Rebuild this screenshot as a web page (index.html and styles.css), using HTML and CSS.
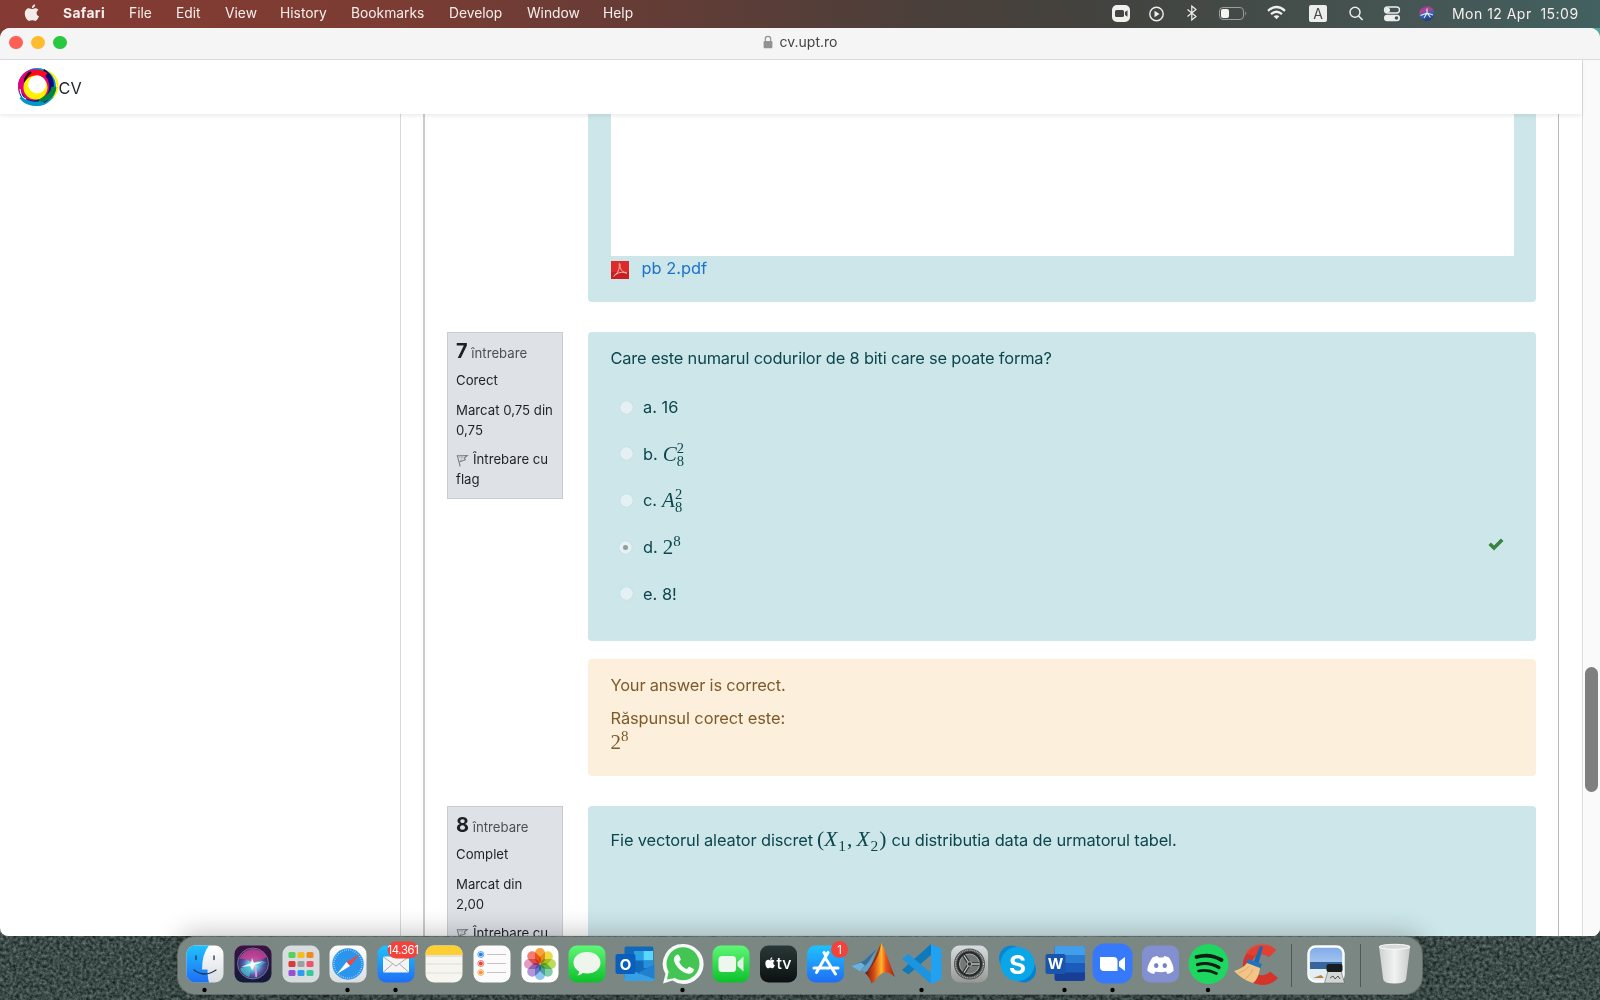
FILE: index.html
```html
<!DOCTYPE html>
<html lang="ro">
<head>
<meta charset="utf-8">
<title>CV</title>
<link rel="stylesheet" href="styles.css">
</head>
<body>
<div class="desktop">
<svg class="wallpaper" width="1600" height="75"><filter id="grain" x="0" y="0" width="100%" height="100%" color-interpolation-filters="sRGB"><feTurbulence type="fractalNoise" baseFrequency="0.3" numOctaves="3" seed="4"/><feColorMatrix values="0 0.45 0 0 0.01  0 0.48 0 0 0.05  0 0.47 0 0 0.045  0 0 0 0 1"/></filter><rect width="1600" height="75" filter="url(#grain)"/></svg>

<header class="menubar">
  <svg class="apple" viewBox="0 0 16 18"><path d="M8 5.100C9 5.100 9.700 4.200 11.200 4.200c1.400 0 2.500.7 3.200 1.700-2.700 1.500-2.300 5.300.6 6.400-.7 2-2.100 4.500-3.600 4.600-1.100 0-1.700-.7-3.200-.7-1.400 0-2 .7-3.100.7C3 17 .8 12.700.8 9.600c0-3.400 2.100-5.400 4.200-5.400 1.300 0 2.200.9 3 .9zM7.900 4.200C7.800 2.300 9.300.6 11.100.3c.3 2-1.400 3.900-3.200 3.900z" fill="#f3ebe9"/></svg>
  <nav class="menus"><b class="m-safari">Safari</b><span class="m-file">File</span><span class="m-edit">Edit</span><span class="m-view">View</span><span class="m-history">History</span><span class="m-bookmarks">Bookmarks</span><span class="m-develop">Develop</span><span class="m-window">Window</span><span>Help</span></nav>
  <div class="status">
    <svg width="36" height="27"><rect x="9" y="5" width="18" height="17" rx="5" fill="#f0f0ee"/><rect x="12" y="10" width="9" height="7" rx="1.500" fill="#454440"/><path d="M22 12l2.500-1.800v6.600L22 15z" fill="#454440"/></svg>
    <svg width="35" height="27"><circle cx="17.500" cy="14" r="6.700" fill="none" stroke="#efefed" stroke-width="1.400"/><path d="M15.500 10.800v6.400l5-3.200z" fill="#efefed"/></svg>
    <svg width="36" height="27"><path d="M13.500 9.500l8.500 7-4.200 3.500V6l4.200 3.500-8.500 7" fill="none" stroke="#efefed" stroke-width="1.200"/></svg>
    <svg width="45" height="27"><rect x="9.500" y="7.500" width="24" height="12" rx="3.500" fill="none" stroke="#9b9e9b"/><path d="M35.300 11.500q2 2 0 4z" fill="#9b9e9b"/><rect x="11" y="9" width="8" height="9" rx="2" fill="#f4f4f2"/></svg>
    <svg width="43" height="27"><g fill="none" stroke="#efefed" stroke-width="2.300"><path d="M13 10.800q8.500-7.600 17 0"/><path d="M16 14.100q5.500-4.800 11 0"/></g><path d="M18.600 16.300q2.900-2.200 5.800 0l-2.900 3z" fill="#efefed"/></svg>
    <svg width="40" height="27"><rect x="11" y="5" width="18" height="17" rx="2" fill="#eceeed"/><text x="20" y="18.600" text-anchor="middle" class="kbd">A</text></svg>
    <svg width="36" height="27"><circle cx="17" cy="12.300" r="5" fill="none" stroke="#eceeed" stroke-width="1.500"/><path d="M20.600 16l4 4" stroke="#eceeed" stroke-width="1.700"/></svg>
    <svg width="36" height="27"><rect x="10.500" y="7" width="15" height="6" rx="3" fill="none" stroke="#eceeed" stroke-width="1.300"/><circle cx="13.500" cy="10" r="2.500" fill="#eceeed"/><rect x="10" y="14.800" width="16" height="6.500" rx="3.200" fill="#eceeed"/><circle cx="22.500" cy="18" r="1.800" fill="#465553"/></svg>
    <svg width="34" height="27"><defs><linearGradient id="orb" x2="0.300" y2="1"><stop offset="0" stop-color="#4a4a9b"/><stop offset=".35" stop-color="#c0408c"/><stop offset=".65" stop-color="#3563b8"/><stop offset="1" stop-color="#243d80"/></linearGradient></defs><circle cx="16.800" cy="13.500" r="7.500" fill="url(#orb)"/><path d="M10.500 15.500l6.500-2.500 6 2M17 8.500v4.500l-3 5M17 13l3.500 4.500" fill="none" stroke="#d8f4f5" stroke-width="1.100"/></svg>
    <span class="clock">Mon 12 Apr&nbsp; 15:09</span>
  </div>
</header>

<main class="window">
  <div class="titlebar">
    <i class="light red"></i><i class="light amber"></i><i class="light green"></i>
    <div class="address"><svg width="10" height="14" viewBox="0 0 10 14"><path d="M2.300 6V4a2.700 2.700 0 0 1 5.400 0v2" fill="none" stroke="#929292" stroke-width="1.200"/><rect x=".6" y="6" width="8.800" height="7.300" rx="1.200" fill="#929292"/></svg>cv.upt.ro</div>
  </div>
  <div class="viewport">
    <div class="site">
      <div class="sitebar">
        <svg class="logo" width="44" height="44" viewBox="16 65 44 44"><g fill="none"><circle cx="42" cy="86" r="15.500" stroke="#fff100" stroke-width="2"/><circle cx="37" cy="87" r="16" stroke="#0098c4" stroke-width="6"/><circle cx="34.800" cy="86" r="14" stroke="#e6007e" stroke-width="5.500"/><path d="M43 71q11 7 8 20-2 7-8 10" stroke="#0c0876" stroke-width="4.500"/><path d="M26 91q-1-16 11-18 5-1 9 2" stroke="#ff0a16" stroke-width="5"/><path d="M25 82q0-6 6-10" stroke="#1d0710" stroke-width="2.500"/><path d="M54 87q-1 10-15 13.500" stroke="#008540" stroke-width="5"/><path d="M21 94q5 10 18 7" stroke="#0d147a" stroke-width="2.500"/><path d="M21 97q7 9 20 6" stroke="#0098c4" stroke-width="4"/><path d="M20 89q1 9 6 10" stroke="#fff" stroke-width="1"/></g><circle cx="35.500" cy="87.500" r="12" fill="#fff100"/><circle cx="37" cy="84.500" r="9" fill="#fff"/></svg><span>CV</span>
      </div>
      <div class="page">
        <aside class="drawer"></aside>
        <div class="gutter"></div>
        <section class="quiz">
          <div class="question">
            <div class="info-space"></div>
            <div class="content upload">
              <div class="frame"></div>
              <div class="file"><svg width="18" height="18" viewBox="0 0 18 18"><rect width="18" height="18" fill="#dc2b2b"/><rect y="11" width="18" height="7" fill="#c71f22"/><path d="M2.500 15.500C6 13.500 9 8 8.200 3.500c-.3-1.600 1-1.400.8.200C8.600 8 12 12 16 12.300M3 14.500C6.500 11.500 11 10.800 15.500 11.500" fill="none" stroke="#f8b6ad" stroke-width="1"/></svg><a>pb 2.pdf</a></div>
            </div>
          </div>

          <div class="question">
            <div class="info">
              <h3><b>7</b> întrebare</h3>
              <p>Corect</p>
              <p>Marcat 0,75 din 0,75</p>
              <p><svg class="flag" width="13" height="14" viewBox="0 0 13 14"><path d="M1.200 2.200L4.200 13.500M1.500 2.800l9.800-.3-3 2.600 1 1.600-5.500 2" fill="none" stroke="#7c8085" stroke-width="1.100"/><path d="M3 4l4 0-3 4" fill="none" stroke="#a0a4a9" stroke-width=".8"/></svg>Întrebare cu flag</p>
            </div>
            <div class="column">
              <div class="content multi">
                <div class="qtext">Care este numarul codurilor de 8 biti care se poate forma?</div>
                <div class="answer"><i class="radio"></i><span>a. 16</span></div>
                <div class="answer"><i class="radio"></i><span>b.</span><span class="math"><em>C</em><span class="both"><span>2</span><span>8</span></span></span></div>
                <div class="answer"><i class="radio"></i><span>c.</span><span class="math"><em>A</em><span class="both"><span>2</span><span>8</span></span></span></div>
                <div class="answer"><i class="radio checked"></i><span>d.</span><span class="math">2<sup>8</sup></span><svg class="tick" width="16" height="13" viewBox="0 0 16 13"><path d="M1.700 5.700l4.300 4.300 8.200-8.200" fill="none" stroke="#388340" stroke-width="3.600"/></svg></div>
                <div class="answer"><i class="radio"></i><span>e. 8!</span></div>
              </div>
              <div class="feedback"><p>Your answer is correct.</p><p>Răspunsul corect este:</p><div class="math">2<sup>8</sup></div></div>
            </div>
          </div>

          <div class="question">
            <div class="info">
              <h3><b>8</b> întrebare</h3>
              <p>Complet</p>
              <p>Marcat din<br>2,00</p>
              <p><svg class="flag" width="13" height="14" viewBox="0 0 13 14"><path d="M1.200 2.200L4.200 13.500M1.500 2.800l9.800-.3-3 2.600 1 1.600-5.500 2" fill="none" stroke="#7c8085" stroke-width="1.100"/><path d="M3 4l4 0-3 4" fill="none" stroke="#a0a4a9" stroke-width=".8"/></svg>Întrebare cu</p>
            </div>
            <div class="column">
              <div class="content table-question"><span class="before">Fie vectorul aleator discret</span><span class="math">(<em>X</em><sub>1</sub>,<em class="second">X</em><sub>2</sub>)</span><span class="after">cu distributia data de urmatorul tabel.</span></div>
            </div>
          </div>
        </section>
      </div>
    </div>
    <div class="scrollbar"><i class="thumb"></i></div>
  </div>
</main>

<footer class="dock">
  <svg class="defs" width="0" height="0"><defs>
    <linearGradient id="sky" x2="0" y2="1"><stop offset="0" stop-color="#1fc2ff"/><stop offset="1" stop-color="#1e6ef4"/></linearGradient>
    <linearGradient id="silver" x2="0" y2="1"><stop offset="0" stop-color="#fff"/><stop offset="1" stop-color="#d9dde1"/></linearGradient>
    <linearGradient id="lime" x2="0" y2="1"><stop offset="0" stop-color="#5ff777"/><stop offset="1" stop-color="#0cc02b"/></linearGradient>
    <linearGradient id="night" x2="0" y2="1"><stop offset="0" stop-color="#2a3836"/><stop offset="1" stop-color="#0b1011"/></linearGradient>
    <linearGradient id="siribg" x2="0" y2="1"><stop offset="0" stop-color="#3b1243"/><stop offset="1" stop-color="#111b38"/></linearGradient>
    <radialGradient id="siri" cy=".55"><stop offset="0" stop-color="#fff"/><stop offset=".3" stop-color="#69d5e8"/><stop offset=".65" stop-color="#5a58a8"/><stop offset="1" stop-color="#273263"/></radialGradient>
    <linearGradient id="flame" x2="1" y2="0"><stop offset="0" stop-color="#5d1a1a"/><stop offset=".3" stop-color="#d74a14"/><stop offset=".55" stop-color="#ffb62b"/><stop offset=".7" stop-color="#e5501b"/><stop offset="1" stop-color="#9e2710"/></linearGradient>
    <linearGradient id="metal" x2="0" y2="1"><stop offset="0" stop-color="#d9dde0"/><stop offset="1" stop-color="#989894"/></linearGradient>
    <linearGradient id="scene" x2="0" y2="1"><stop offset="0" stop-color="#7ea9e8"/><stop offset="1" stop-color="#cfe3fa"/></linearGradient>
    <linearGradient id="can"><stop offset="0" stop-color="#cfd1d1"/><stop offset=".5" stop-color="#f1f2f2"/><stop offset="1" stop-color="#c8caca"/></linearGradient>
  </defs></svg>

  <svg class="app"><rect x="5.500" y="8.500" width="37" height="37" rx="8.500" fill="url(#silver)"/><path d="M28 8.500H14a8.500 8.500 0 0 0-8.500 8.500v20a8.500 8.500 0 0 0 8.500 8.500h14q-1.500-5-1.500-13h-5.500Q21 17 28 8.500z" fill="url(#sky)"/><path d="M15 19v3.500M33 19v3.500M13 33q10.500 8 22 0" fill="none" stroke="#20364e" stroke-width="1.300" stroke-linecap="round"/><circle cx="23.500" cy="53" r="2.200"/></svg>

  <svg class="app"><rect x="5.500" y="8.500" width="37" height="37" rx="8.500" fill="url(#siribg)"/><circle cx="24" cy="26.500" r="15.500" fill="url(#siri)" stroke="#9b87b4" stroke-width=".7"/><path d="M10 22q5-10 14-10t14 8q-5 3-14 6-7-5-14-4z" fill="#cf3c91" opacity=".8"/><path d="M11 32q9-6 13-5 4-2 13-2-6 5-13 3-2 5-4 12-6-2-9-8z" fill="#48c7d0" opacity=".7"/><path d="M24 28q4 5 3 12" fill="none" stroke="#f0a0d8" stroke-width="2" opacity=".9"/><path d="M12 30l10-4 1-5 2 5 10-2-9 4-3 5-2-4z" fill="#fff" opacity=".9"/></svg>

  <svg class="app"><rect x="5.500" y="8.500" width="37" height="37" rx="8.500" fill="#d7dcdf"/><g><rect x="11.500" y="15" width="7" height="6" rx="1.500" fill="#55d05e"/><rect x="20.500" y="15" width="7" height="6" rx="1.500" fill="#f7bd20"/><rect x="29.500" y="15" width="7" height="6" rx="1.500" fill="#ef8b21"/><rect x="11.500" y="24" width="7" height="6" rx="1.500" fill="#d83b35"/><rect x="20.500" y="24" width="7" height="6" rx="1.500" fill="#9da0a0"/><rect x="29.500" y="24" width="7" height="6" rx="1.500" fill="#f34f6e"/><rect x="11.500" y="33" width="7" height="6" rx="1.500" fill="#9650d2"/><rect x="20.500" y="33" width="7" height="6" rx="1.500" fill="#2e9bf0"/><rect x="29.500" y="33" width="7" height="6" rx="1.500" fill="#37c99b"/></g></svg>

  <svg class="app"><rect x="5.500" y="8.500" width="37" height="37" rx="8.500" fill="url(#silver)"/><circle cx="24" cy="27" r="15.700" fill="#2b94ec"/><circle cx="24" cy="27" r="14" fill="none" stroke="#bce2ff" stroke-width="1.500" stroke-dasharray=".6 1.600"/><path d="M36 17L22.500 25l3.500 4z" fill="#f0483e"/><path d="M13 37l9.500-12 3.500 4z" fill="#fff"/><circle cx="23.500" cy="53" r="2.200"/></svg>

  <svg class="app"><rect x="5.500" y="8.500" width="37" height="37" rx="8.500" fill="url(#sky)"/><rect x="11" y="19.500" width="26" height="16" rx="1.500" fill="#f4f4f2"/><path d="M11.500 20l12.500 9 12.500-9M11.500 35l9-8M36.500 35l-9-8" fill="none" stroke="#a9adaf"/><rect x="15.500" y="4.500" width="31" height="17" rx="8.500" fill="#f1423b"/><text x="31" y="16.500" class="badge">14.361</text><circle cx="23.500" cy="53" r="2.200"/></svg>

  <svg class="app"><rect x="5.500" y="8.500" width="37" height="37" rx="8.500" fill="#f7f5f0"/><path d="M5.500 18v-1a8.500 8.500 0 0 1 8.500-8.500h20a8.500 8.500 0 0 1 8.500 8.500v1z" fill="#fdcf34"/><path d="M5.500 19h37" stroke="#9d958a" stroke-dasharray="1 1" stroke-width=".8"/><path d="M6 27h36M6 36h36" stroke="#d9d7d2" stroke-width=".8"/></svg>

  <svg class="app"><rect x="5.500" y="8.500" width="37" height="37" rx="8.500" fill="#fbfbfc"/><path d="M19 17.500h19M19 26.500h19M19 35.500h19" stroke="#c7c1c7"/><g fill="#1e82ea"><circle cx="12.800" cy="17.500" r="2"/><circle cx="12.800" cy="17.500" r="3" fill="none" stroke="#1e82ea" stroke-width=".7"/></g><circle cx="12.800" cy="26.500" r="2" fill="#e74136"/><circle cx="12.800" cy="26.500" r="3" fill="none" stroke="#e74136" stroke-width=".7"/><circle cx="12.800" cy="35.500" r="2" fill="#f19732"/><circle cx="12.800" cy="35.500" r="3" fill="none" stroke="#f19732" stroke-width=".7"/></svg>

  <svg class="app"><rect x="5.500" y="8.500" width="37" height="37" rx="8.500" fill="#fff"/><g class="petals"><rect x="19" y="11" width="10" height="15.500" rx="5" fill="#f79a28"/><rect x="19" y="11" width="10" height="15.500" rx="5" fill="#e6d72f" transform="rotate(45 24 27)"/><rect x="19" y="11" width="10" height="15.500" rx="5" fill="#b4d849" transform="rotate(90 24 27)"/><rect x="19" y="11" width="10" height="15.500" rx="5" fill="#72c9a0" transform="rotate(135 24 27)"/><rect x="19" y="11" width="10" height="15.500" rx="5" fill="#82bfec" transform="rotate(180 24 27)"/><rect x="19" y="11" width="10" height="15.500" rx="5" fill="#a98cd4" transform="rotate(225 24 27)"/><rect x="19" y="11" width="10" height="15.500" rx="5" fill="#df91c1" transform="rotate(270 24 27)"/><rect x="19" y="11" width="10" height="15.500" rx="5" fill="#f3705e" transform="rotate(315 24 27)"/></g></svg>

  <svg class="app"><rect x="5.500" y="8.500" width="37" height="37" rx="8.500" fill="url(#lime)"/><path d="M24 15c8 0 13.500 4.700 13.500 10.700S32 36.500 24 36.500c-1.500 0-3-.2-4.200-.5-1.700 1.600-3.500 2.400-5.500 2.400 1.200-1.200 1.800-2.500 1.800-3.900-3.500-2-5.600-5-5.600-8.800C10.500 19.700 16 15 24 15z" fill="#edf5ed"/></svg>

  <svg class="app"><rect x="13.500" y="9.500" width="29" height="32" rx="2" fill="#1268b9"/><path d="M23 14h9.500v9.500H23z" fill="#2aa1e4"/><path d="M32.500 14h9.500v9.500h-9.500z" fill="#58d8fa"/><path d="M32.500 23.500h9.500V31h-9.500z" fill="#2590dc"/><path d="M13.500 28l15 9 15-10v15.500a1.500 1.500 0 0 1-1.500 1.500H15a1.500 1.500 0 0 1-1.500-1.500z" fill="#36a0e6"/><path d="M27 36l16.500-9v15z" fill="#227fce"/><rect x="4.500" y="17" width="20" height="20" rx="2" fill="#0a5fbd"/><text x="14.500" y="32.500" class="letter">O</text></svg>

  <svg class="app"><path d="M24 7A20 20 0 1 1 13.500 43.600L4 46.500 6.500 37A20 20 0 0 1 24 7z" fill="#f7faf8"/><circle cx="24" cy="26.700" r="16.500" fill="#43c554"/><path d="M9.500 35L8 42.500 16.500 41z" fill="#43c554"/><path d="M18.500 17.500c1.800-.6 2.500 3.600 3.300 4.500.3 1-1.700 2.500-1.700 3 2 4 4.500 5.700 7.500 7 .8 0 2-2.400 2.800-2.300 2 .9 4.500 2 4.500 2.500 0 3-3 4.800-5.200 4.600-6.500-.8-14-7.500-14.800-14 0-2.800 2-5 3.600-5.300z" fill="#f9fcf9"/><circle cx="23.500" cy="53" r="2.200"/></svg>

  <svg class="app"><rect x="5.500" y="8.500" width="37" height="37" rx="8.500" fill="url(#lime)"/><rect x="11.500" y="19" width="17.500" height="16" rx="3.500" fill="#edf7ed"/><path d="M30.500 25l6-5.500v15l-6-5.500z" fill="#e1f0e2"/></svg>

  <svg class="app"><rect x="5" y="8.500" width="37" height="37" rx="8.500" fill="url(#night)"/><g transform="translate(9.800 20) scale(.67)"><path d="M8 5.100c1 0 1.700-.9 3.200-.9 1.400 0 2.500.7 3.200 1.700-2.700 1.500-2.300 5.300.6 6.400-.7 2-2.100 4.500-3.600 4.600-1.100 0-1.700-.7-3.200-.7-1.400 0-2 .7-3.100.7C3 17 .8 12.700.8 9.600c0-3.400 2.100-5.400 4.200-5.400 1.300 0 2.200.9 3 .9zM7.900 4.200C7.800 2.300 9.300.6 11.100.3c.3 2-1.400 3.900-3.200 3.900z" fill="#fff"/></g><text x="21.500" y="32" class="tv">tv</text></svg>

  <svg class="app"><rect x="5" y="8.500" width="37" height="37" rx="8.500" fill="url(#sky)"/><path d="M22 15.500l2 3.500 2-3.500M24 19l-9.500 16.500M23 20.500L33.500 37M12 31h15M31 31h5" fill="none" stroke="#fff" stroke-width="3" stroke-linecap="round"/><circle cx="37.500" cy="12.500" r="8.500" fill="#f1423b"/><text x="37.500" y="16.500" class="badge">1</text></svg>

  <svg class="app"><path d="M1 29l13-5.500L27 11l-9 25z" fill="#5f9fc8"/><path d="M1 29l9 5.500 9-10 8-13-13 12z" fill="#3b6f98"/><path d="M1 29l9 5.500 5-6-4-3z" fill="#6fb0d8"/><path d="M15 36c7-5 11-20 16-30 5 8 8 19 14 34-6-5-9-6-14-3-4 3-6 8-9.500 9.500-1-4-3-7-6.500-10.500z" fill="url(#flame)"/><path d="M31 6c-1 10-5 18-10.500 25L15 36c7-5 11-20 16-30z" fill="#6b1f1a" opacity=".7"/></svg>

  <svg class="app"><path d="M33 7L43.500 12v30L33 47z" fill="#21a1f1"/><path d="M33 7v11L10.500 37.500 4 33z" fill="#0f79bd"/><path d="M10.500 17L33 36v11L4 21.500z" fill="#1d94df"/><circle cx="23.500" cy="53" r="2.200"/></svg>

  <svg class="app"><rect x="5" y="8.500" width="37" height="37" rx="8.500" fill="url(#metal)"/><g transform="translate(-.5 0)"><circle cx="24" cy="27" r="15.500" fill="#505454"/><circle cx="24" cy="27" r="14" fill="none" stroke="#b8bbba" stroke-width="1.200" stroke-dasharray="1 .8"/><circle cx="24" cy="27" r="11" fill="none" stroke="#262a2a" stroke-width="3"/><circle cx="24" cy="27" r="10" fill="#747978" stroke="#c0c2c1" stroke-width=".8"/><g stroke="#2f3434" stroke-width="3.500"><path d="M24 27h10M24 27l-5.500-8.500M24 27l-5.500 8.500"/></g><g stroke="#bfc2c1" stroke-width="1.300"><path d="M24 27h10M24 27l-5.500-8.500M24 27l-5.500 8.500"/></g><circle cx="24" cy="27" r="2.300" fill="#303535" stroke="#b4b6b5"/></g></svg>

  <svg class="app"><circle cx="17.500" cy="21" r="12.500" fill="#0a86d1"/><circle cx="29.500" cy="33" r="12.500" fill="#0681d0"/><circle cx="23.500" cy="27" r="17" fill="#0ba6e8"/><text x="23.500" y="36.500" class="skype">S</text></svg>

  <svg class="app"><rect x="13.500" y="9" width="30.500" height="35" rx="2" fill="#173f96"/><path d="M15 9h27.500a1.500 1.500 0 0 1 1.500 1.500V18H13.500v-7.500A1.500 1.500 0 0 1 15 9z" fill="#429eea"/><path d="M13.500 18H44v8.500H13.500z" fill="#2b7bd3"/><path d="M13.500 26.500H44v9H13.500z" fill="#1c5bb9"/><rect x="4.500" y="17" width="20" height="20" rx="2" fill="#1955ad"/><text x="14.500" y="32" class="letter">W</text><circle cx="23.500" cy="53" r="2.200"/></svg>

  <svg class="app"><rect x="3.500" y="6.500" width="40" height="40" rx="12" fill="#3779fb"/><path d="M11 20h13.500a4 4 0 0 1 4 4v10H15a4 4 0 0 1-4-4z" fill="#fff"/><path d="M30 24.500l6-4.500v14l-6-4.500z" fill="#fff"/><circle cx="23.500" cy="53" r="2.200"/></svg>

  <svg class="app"><rect x="5" y="8.500" width="37" height="37" rx="8.500" fill="#8290d2"/><path d="M15.500 20.500q3-1.500 5-1.500l1 1.500h5L27 19q2 0 5 1.500c3 4.500 5 9.500 4.500 13.500q-3 2.500-6 3l-1.500-2.500q-5 1.500-10.500 0L17 37Q13.500 36.500 10.500 34c-.5-4 2-9 5-13.500z" fill="#fff"/><ellipse cx="19.200" cy="28.500" rx="2.200" ry="2.500" fill="#7482c4"/><ellipse cx="27.800" cy="28.500" rx="2.200" ry="2.500" fill="#7482c4"/></svg>

  <svg class="app"><circle cx="23.500" cy="27" r="20" fill="#1ed760"/><g fill="none" stroke="#0c1f13" stroke-linecap="round"><path d="M11.500 20q13-4 25 3" stroke-width="3.800"/><path d="M12.500 27.500q11-3 21.500 3" stroke-width="3.200"/><path d="M13.500 34q9-2 18 2.500" stroke-width="2.700"/></g><circle cx="23" cy="53" r="2.200"/></svg>

  <svg class="app"><path d="M43 13A20 20 0 1 0 45 41l-8-6.500a10.500 10.500 0 1 1-1-14.500z" fill="#d6332a"/><path d="M12 16Q18 6 31 6.500q8 1 12 6.500l-7 7q-8-5-15-1z" fill="#e84a38" opacity=".6"/><path d="M27 9l3 1-5 18-5-1.500z" fill="#1d68b0"/><path d="M15 22l14 5-2 5-14-5z" fill="#2273be"/><path d="M14 26l13 5c-1 7-3 12-7 15-7-2-14-7-19-12 6-2 10-4 13-8z" fill="#f2c486"/><path d="M6 36q8-3 10-7M12 42q7-5 8-10" fill="none" stroke="#cc965a" stroke-width=".6"/></svg>

  <i class="divider"></i>
  <svg class="app"><rect x="6.500" y="9.500" width="35" height="35" rx="7" fill="url(#scene)" stroke="#fbfcfd" stroke-width="2.500"/><rect x="8" y="25" width="32" height="7" fill="#37669c"/><path d="M8 32h32v6q0 5-5 5H13q-5 0-5-5z" fill="#e4edf0"/><path d="M11 41l8-3 3 3z" fill="#b58048"/><path d="M26 34h13l3.500 12H22.500z" fill="#d4d6d4" stroke="#63686b" stroke-width=".6"/><rect x="24.500" y="27" width="16" height="8" rx="2" fill="#171c1f"/><path d="M28 41l3-2 2 3 3-3 2 3" fill="none" stroke="#333" stroke-width=".8"/></svg>
  <i class="divider narrow"></i>
  <svg class="app"><g transform="translate(.6 0)"><path d="M8.500 10l4 32q.5 4.500 11.500 4.500t11.500-4.500l4-32z" fill="url(#can)"/><ellipse cx="24" cy="9.800" rx="15.500" ry="2.500" fill="#d8dada" stroke="#f9f9f9"/></g></svg>
</footer>
</div>
</body>
</html>
```
FILE: styles.css
```css
* { box-sizing: border-box; }
body { margin: 0; font-family: Inter, "Liberation Sans", sans-serif; }
p, h3 { margin: 0; }
em { font-style: italic; }

.desktop { position: relative; width: 1600px; height: 1000px; overflow: hidden; display: flex; flex-direction: column; background: linear-gradient(90deg, #7d3a33, #3d2523 45%, #1c2120 70%, #57a6a3 99%); }
.wallpaper { position: absolute; left: 0; bottom: 0; }

/* menu bar */
.menubar { height: 28px; flex: none; display: flex; align-items: center; padding: 0 21px 2px 24px; background: linear-gradient(90deg, #853b33 0, #7c3c33 24%, #653c36 40%, #4a3f3a 58%, #42433f 70%, #455553 88%, #426160 100%); color: #f5eeec; font-size: 13.800px; }
.apple { width: 16px; height: 18px; flex: none; margin-right: 23px; }
.menus { display: flex; flex: 1; }
.menus > * { flex: none; }
.menus .m-safari { width: 66px; letter-spacing: .4px; }
.m-file { width: 47px; }
.m-edit { width: 49px; }
.m-view { width: 55px; }
.m-history { width: 71px; }
.m-bookmarks { width: 98px; }
.m-develop { width: 78px; }
.m-window { width: 76px; }
.status { display: flex; align-items: center; }
.status svg { display: block; }
.clock { width: 127px; margin-left: 8px; white-space: nowrap; font-size: 14px; letter-spacing: .47px; }
.kbd { font-size: 14px; fill: #464a48; }

/* browser window */
.window { position: relative; height: 908px; flex: none; display: flex; flex-direction: column; border-radius: 10px 10px 8px 8px; overflow: hidden; background: #fff; }
.titlebar { height: 32px; flex: none; display: flex; align-items: center; padding: 0 9px 2px; background: #f5f5f5; border-bottom: 1px solid #dcdcdc; }
.light { width: 13.500px; height: 13.500px; margin-right: 8.700px; border-radius: 50%; }
.red { background: #fe5f57; }
.amber { background: #febc2e; }
.green { background: #28c840; }
.address { display: flex; align-items: center; gap: 7px; margin-left: 687px; font-size: 14px; color: #444; padding-bottom: 2px; }
.viewport { flex: 1; min-height: 0; display: flex; }
.site { flex: 1; min-width: 0; display: flex; flex-direction: column; }
.sitebar { position: relative; height: 54px; flex: none; display: flex; align-items: center; padding-left: 16px; background: #fff; font-size: 16.300px; color: #26292c; box-shadow: 0 2px 4px rgba(0,0,0,.08); }
.sitebar span { padding-top: 2px; }
.logo { margin-right: -1.500px; }
.scrollbar { width: 18px; flex: none; padding: 607px 2px 0 2px; background: #fafafa; border-left: 1px solid #ddd; }
.thumb { display: block; width: 12.500px; height: 125px; border-radius: 7px; background: #7f7f7f; }

.page { flex: 1; min-height: 0; display: flex; padding-right: 23px; }
.drawer { width: 401px; flex: none; border-right: 1px solid #d9d9d9; }
.gutter { width: 22px; flex: none; }
.quiz { flex: 1; min-width: 0; overflow: hidden; display: flex; flex-direction: column; gap: 30px; padding: 0 22px; border-left: 2px solid #ccc; border-right: 1px solid #b9b9b9; }

/* questions */
.question { display: flex; gap: 25px; align-items: flex-start; flex: none; }
.info, .info-space { width: 116px; flex: none; }
.info { height: 167px; padding: 9px 6px 0 8px; display: flex; flex-direction: column; gap: 9.500px; border: 1px solid #c8ccd1; background: #dee1e6; color: #1e2225; font-size: 13.200px; line-height: 20px; }
.info h3 { height: 18.500px; font-size: 13.200px; font-weight: 400; color: #4b5056; line-height: 20px; white-space: nowrap; }
.info b { font-size: 20px; line-height: 18px; color: #1d2125; }
.flag { margin-right: 4px; vertical-align: -3px; }
.column { flex: 1; display: flex; flex-direction: column; gap: 18px; }
.content { flex: 1; border-radius: 4px; background: #cde6e9; color: #0c464d; font-size: 16.400px; letter-spacing: -.17px; }
.upload { height: 188px; padding: 0 22.500px; border-radius: 0 0 4px 4px; }
.frame { height: 142px; background: #fff; }
.file { display: flex; align-items: center; gap: 13px; height: 27px; color: #1a73c9; letter-spacing: 0; }
.file a { margin-top: -3px; }
.multi { flex: none; height: 309px; padding: 13px 22.500px 0; }
.qtext { height: 39px; line-height: 27px; white-space: nowrap; }
.answer { height: 46.600px; display: flex; align-items: center; padding: 0 10px 0 9.500px; white-space: nowrap; letter-spacing: 0; }
.radio { width: 13px; height: 13px; margin-right: 10px; border-radius: 50%; background: #e4f1f4; box-shadow: 0 0 1px #a9c1c5; }
.checked { margin-left: -1px; margin-right: 11px; border: 4px solid #e4f1f4; background: #909c9e; }
.tick { margin-left: auto; margin-top: -6px; }
.math { font-family: "Liberation Serif", serif; font-size: 21px; line-height: 24px; display: flex; align-items: center; letter-spacing: 0; }
.answer .math { margin-left: 5px; }
.math sup { font-size: 15px; line-height: 1; align-self: flex-start; margin-top: -1px; vertical-align: 0; }
.math sub { font-size: 15.500px; line-height: 1; align-self: flex-end; margin: 0 1px -2px; vertical-align: 0; }
.both { display: flex; flex-direction: column; font-size: 14.500px; line-height: 13px; padding-top: 2px; }
.feedback { height: 117px; padding: 13px 22.500px; border-radius: 4px; background: #fcefdc; color: #7d5a29; font-size: 16.400px; line-height: 26px; letter-spacing: -.17px; }
.feedback p + p { margin-top: 7px; letter-spacing: -.08px; }
.feedback .math { margin-top: -1px; }
.table-question { flex: none; height: 160px; padding: 21px 22.500px 0; display: flex; align-items: flex-start; white-space: nowrap; line-height: 26px; }
.before, .after { letter-spacing: -.12px; }
.table-question .math { margin: 0 5px 0 4px; font-size: 21.500px; }
.second { margin-left: 4px; }

/* dock */
.dock { position: absolute; left: 178px; top: 937px; width: 1244px; height: 57px; display: flex; padding-left: 3px; border-radius: 17px; background: #7b8783; box-shadow: 0 0 0 1px rgba(170,180,176,.4), 0 0 2px #222, 0 -4px 26px rgba(0,0,0,.24); }
.defs { position: absolute; }
.app { width: 47.800px; height: 57px; flex: none; overflow: visible; }
.petals rect { mix-blend-mode: multiply; opacity: .9; }
.badge { font-size: 11.300px; fill: #fff; text-anchor: middle; letter-spacing: -.3px; }
.letter { font-size: 15px; font-weight: 700; fill: #fff; text-anchor: middle; }
.skype { font-size: 26px; font-weight: 700; fill: #fff; text-anchor: middle; }
.tv { font-size: 16px; font-weight: 500; fill: #fff; }
.divider { width: 22px; height: 43px; margin-top: 7px; flex: none; background: linear-gradient(#4d5956, #4d5956) center / 1px 100% no-repeat; }
.narrow { width: 20px; }
```
